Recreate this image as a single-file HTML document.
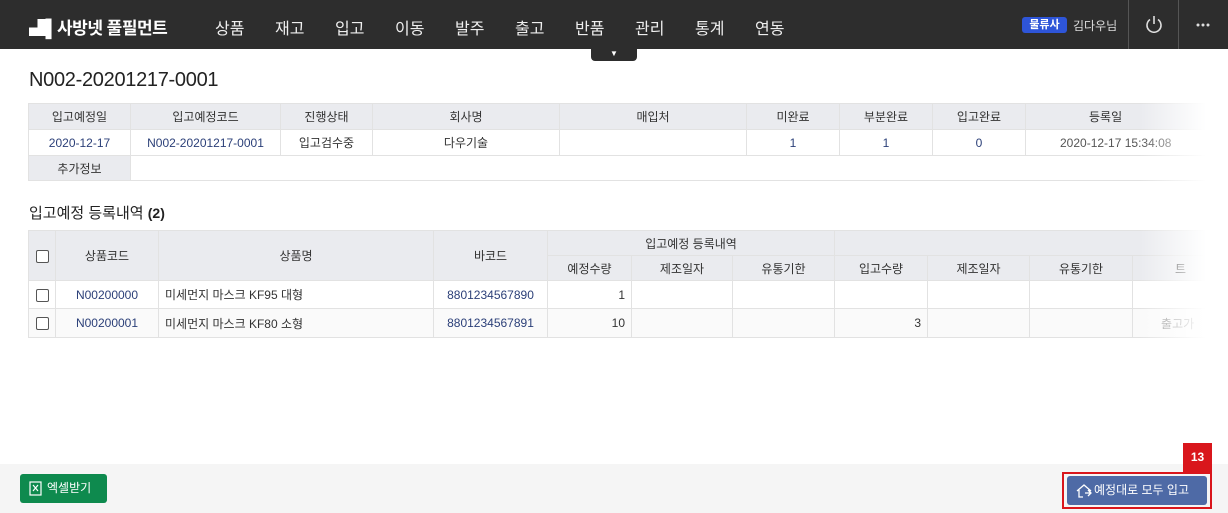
<!DOCTYPE html>
<html><head><meta charset="utf-8"><style>
*{box-sizing:border-box;margin:0;padding:0}
body{width:1228px;height:513px;overflow:hidden;background:#fff;font-family:"Liberation Sans","Noto Sans CJK KR",sans-serif;color:#333;position:relative}
.hdr{position:absolute;left:0;top:0;width:1228px;height:49px;background:#2d2d2d;color:#fff}
.logo{position:absolute;left:29px;top:14px;font-size:17px;font-weight:bold;letter-spacing:-0.5px}
.nav{position:absolute;top:15px;font-size:16px;color:#eee}
.tab{position:absolute;left:591px;top:49px;width:46px;height:12px;background:#2d2d2d;border-radius:0 0 4px 4px;color:#fff;font-size:8px;text-align:center;line-height:10px}
.badge{position:absolute;left:1022px;top:17px;width:45px;height:16px;background:#2e55d8;border-radius:3px;color:#fff;font-size:11px;font-weight:bold;text-align:center;line-height:16px}
.user{position:absolute;left:1073px;top:17px;font-size:12px;color:#ddd}
.vl{position:absolute;top:0;width:1px;height:49px;background:#555}
h1{position:absolute;left:29px;top:69px;font-size:20px;font-weight:normal;color:#222;letter-spacing:-0.3px}
table{position:absolute;border-collapse:collapse;font-size:12px;table-layout:fixed}
td,th{border:1px solid #e2e2e2;text-align:center;font-weight:normal;overflow:hidden;white-space:nowrap}
th{background:#eaebef;color:#333}
.t1 td{color:#2b3f78}
h2{position:absolute;left:29px;top:202px;font-size:15px;font-weight:normal;color:#222}
.cb{display:inline-block;width:13px;height:13px;border:1px solid #555;border-radius:2px;background:#fff;vertical-align:middle}
.bl{border-left:1.5px solid #444}
.fade{position:absolute;left:1140px;top:95px;width:88px;height:250px;background:linear-gradient(to right,rgba(255,255,255,0),#fff 75%)}
.foot{position:absolute;left:0;top:464px;width:1228px;height:49px;background:#f5f5f5}
.xl{position:absolute;left:20px;top:474px;width:87px;height:29px;background:#0e8a4e;border-radius:3px;color:#fff;font-size:12px;line-height:29px;padding-left:27px}
.red{position:absolute;left:1062px;top:472px;width:150px;height:37px;border:2px solid #d9161c}
.rb{position:absolute;left:1183px;top:443px;width:29px;height:29px;background:#d9161c;color:#fff;font-size:12px;font-weight:bold;text-align:center;line-height:29px}
.bb{position:absolute;left:1067px;top:476px;width:140px;height:29px;background:#4e6aa6;border-radius:3px;color:#fff;font-size:12px;line-height:29px;padding-left:27px}
</style></head><body>
<div class="hdr">
<div class="logo">▟▌사방넷 풀필먼트</div>
<span class="nav" style="left:215px">상품</span><span class="nav" style="left:275px">재고</span><span class="nav" style="left:335px">입고</span><span class="nav" style="left:395px">이동</span><span class="nav" style="left:455px">발주</span><span class="nav" style="left:515px">출고</span><span class="nav" style="left:575px">반품</span><span class="nav" style="left:635px">관리</span><span class="nav" style="left:695px">통계</span><span class="nav" style="left:755px">연동</span>
<div class="badge">물류사</div><div class="user">김다우님</div>
<div class="vl" style="left:1128px"></div><div class="vl" style="left:1178px"></div>
<svg style="position:absolute;left:1145px;top:15px" width="18" height="18" viewBox="0 0 18 18"><path d="M5 4.5A7 7 0 1 0 13 4.5M9 1v8" stroke="#ddd" stroke-width="1.6" fill="none"/></svg>
<svg style="position:absolute;left:1196px;top:23px" width="14" height="4" viewBox="0 0 14 4"><circle cx="2" cy="2" r="1.5" fill="#ddd"/><circle cx="7" cy="2" r="1.5" fill="#ddd"/><circle cx="12" cy="2" r="1.5" fill="#ddd"/></svg>
</div>
<div class="tab">▼</div>
<h1>N002-20201217-0001</h1>
<table class="t1" style="left:28px;top:103px;width:1200px">
<colgroup><col style="width:102px"><col style="width:150px"><col style="width:92px"><col style="width:187px"><col style="width:187px"><col style="width:93px"><col style="width:93px"><col style="width:93px"><col style="width:203px"></colgroup>
<tr style="height:26px"><th>입고예정일</th><th>입고예정코드</th><th>진행상태</th><th>회사명</th><th>매입처</th><th>미완료</th><th>부분완료</th><th>입고완료</th><th style="text-align:left;padding-left:63px">등록일</th></tr>
<tr style="height:26px"><td>2020-12-17</td><td>N002-20201217-0001</td><td style="color:#333">입고검수중</td><td style="color:#333">다우기술</td><td></td><td>1</td><td>1</td><td>0</td><td style="text-align:left;padding-left:34px;color:#555">2020-12-17 15:34:08</td></tr>
<tr style="height:25px"><th>추가정보</th><td colspan="8"></td></tr>
</table>
<h2>입고예정 등록내역 <b style="font-size:14px">(2)</b></h2>
<table style="left:28px;top:230px;width:1200px">
<colgroup><col style="width:27px"><col style="width:103px"><col style="width:275px"><col style="width:114px"><col style="width:84px"><col style="width:101px"><col style="width:102px"><col style="width:93px"><col style="width:102px"><col style="width:103px"><col style="width:96px"></colgroup>
<tr style="height:25px"><th rowspan="2"><span class="cb"></span></th><th rowspan="2">상품코드</th><th rowspan="2">상품명</th><th rowspan="2">바코드</th><th colspan="3" class="bl">입고예정 등록내역</th><th colspan="4" class="bl"></th></tr>
<tr style="height:25px"><th class="bl">예정수량</th><th>제조일자</th><th>유통기한</th><th class="bl">입고수량</th><th>제조일자</th><th>유통기한</th><th>트</th></tr>
<tr style="height:28px;color:#333"><td><span class="cb"></span></td><td style="color:#2b3f78">N00200000</td><td style="text-align:left;padding-left:6px">미세먼지 마스크 KF95 대형</td><td style="color:#2b3f78">8801234567890</td><td class="bl" style="text-align:right;padding-right:6px">1</td><td></td><td></td><td class="bl"></td><td></td><td></td><td></td></tr>
<tr style="height:29px;background:#fafafa;color:#333"><td><span class="cb"></span></td><td style="color:#2b3f78">N00200001</td><td style="text-align:left;padding-left:6px">미세먼지 마스크 KF80 소형</td><td style="color:#2b3f78">8801234567891</td><td class="bl" style="text-align:right;padding-right:6px">10</td><td></td><td></td><td class="bl" style="text-align:right;padding-right:6px">3</td><td></td><td></td><td style="text-align:left;padding-left:28px;color:#999">출고가</td></tr>
</table>
<div class="fade"></div>
<div class="foot"></div>
<div class="xl"><svg style="position:absolute;left:9px;top:7px" width="14" height="15" viewBox="0 0 14 15"><rect x="1" y="1" width="11" height="13" fill="none" stroke="#fff" stroke-width="1.2"/><path d="M4 4l5 6M9 4l-5 6" stroke="#fff" stroke-width="1.2"/></svg>엑셀받기</div>
<div class="rb">13</div>
<div class="red"></div>
<div class="bb"><svg style="position:absolute;left:8px;top:7px" width="18" height="16" viewBox="0 0 18 16"><path d="M2 8L9 2l7 6M4 7v7h4M10 10h6M13 7l3 3-3 3" stroke="#fff" stroke-width="1.3" fill="none"/></svg>예정대로 모두 입고</div>
</body></html>
